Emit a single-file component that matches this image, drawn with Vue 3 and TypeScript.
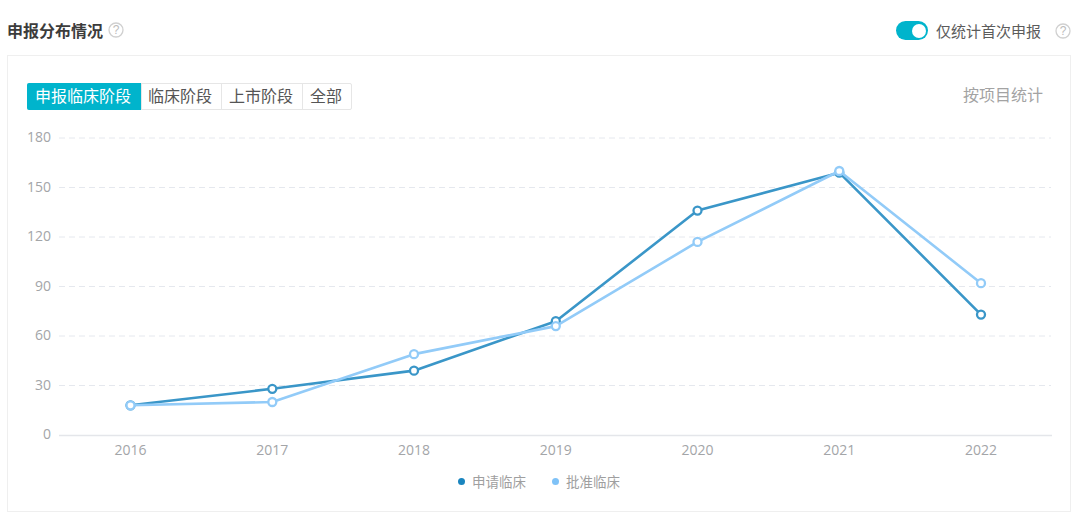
<script setup lang="ts">
const tabs = ['申报临床阶段', '临床阶段', '上市阶段', '全部']
const years = [2016, 2017, 2018, 2019, 2020, 2021, 2022]
const xs = [130.5, 272.3, 414, 555.8, 697.5, 839.3, 981]
const yOf = (v: number) => 435 - v * 1.65
const ticks = [0, 30, 60, 90, 120, 150, 180]
const series = [
  { name: '申请临床', color: '#3a96c8', values: [18, 28, 39, 69, 136, 159, 73] },
  { name: '批准临床', color: '#92cbf8', values: [18, 20, 49, 66, 117, 160, 92] },
]
const pts = (v: number[]) => v.map((n, i) => `${xs[i]},${yOf(n)}`).join(' ')
</script>

<template>
  <div class="page">
    <header class="head">
      <div class="title-wrap">
        <h2 class="title">申报分布情况</h2>
        <svg class="help" viewBox="0 0 16 16"><circle cx="8" cy="8" r="7" /><text x="8" y="12" text-anchor="middle">?</text></svg>
      </div>
      <div class="switch-wrap">
        <span class="switch"><i></i></span>
        <span class="switch-label">仅统计首次申报</span>
        <svg class="help help-r" viewBox="0 0 16 16"><circle cx="8" cy="8" r="7" /><text x="8" y="12" text-anchor="middle">?</text></svg>
      </div>
    </header>
    <section class="card">
      <div class="toolbar">
        <div class="tabs">
          <span v-for="(t, i) in tabs" :key="t" class="tab" :class="{ active: i === 0 }">{{ t }}</span>
        </div>
        <span class="by">按项目统计</span>
      </div>
      <div class="chart">
        <svg class="plot" width="1062" height="402" viewBox="8 110 1062 402">
          <g v-for="t in ticks" :key="t">
            <line v-if="t > 0" x1="59" x2="1051" :y1="yOf(t)" :y2="yOf(t)" class="grid" />
            <text x="51" :y="yOf(t) + 4" text-anchor="end" class="axis">{{ t }}</text>
          </g>
          <line x1="59" x2="1052" y1="435.5" y2="435.5" class="base" />
          <text v-for="(y, i) in years" :key="y" :x="xs[i]" y="455" text-anchor="middle" class="axis">{{ y }}</text>
          <g v-for="s in series" :key="s.name">
            <polyline :points="pts(s.values)" fill="none" :stroke="s.color" stroke-width="2.6" stroke-linejoin="round" />
            <circle v-for="(n, i) in s.values" :key="i" :cx="xs[i]" :cy="yOf(n)" r="4" fill="#fff" :stroke="s.color" stroke-width="2.3" />
          </g>
        </svg>
        <div class="legend">
          <span class="legend-item"><i class="dot dark"></i>申请临床</span>
          <span class="legend-item"><i class="dot light"></i>批准临床</span>
        </div>
      </div>
    </section>
  </div>
</template>

<style>
html, body { margin: 0; background: #fff; }
</style>

<style scoped>
.page {
  width: 1080px;
  height: 528px;
  box-sizing: border-box;
  padding: 0 9px 0 7px;
  font-family: "Noto Sans CJK SC", "Liberation Sans", sans-serif;
  overflow: hidden;
}
.head {
  height: 55px;
  padding-top: 6px;
  box-sizing: border-box;
  display: flex;
  align-items: center;
  justify-content: space-between;
}
.title-wrap, .switch-wrap { display: flex; align-items: center; }
.title {
  margin: -2px 0 0;
  font-size: 16px;
  font-weight: 700;
  color: #3c3c3c;
  line-height: 20px;
  white-space: nowrap;
}
.title-wrap .help { margin-top: -2px; }
.help { width: 16px; height: 16px; margin-left: 5px; }
.help circle { fill: none; stroke: #d0d0d0; stroke-width: 1.3; }
.help text { font-size: 12px; fill: #bcbcbc; font-family: "Liberation Sans", sans-serif; }
.help-r { margin-left: 14px; margin-right: 0; }
.switch {
  width: 32px;
  height: 19px;
  border-radius: 10px;
  background: #00b4cc;
  position: relative;
  margin-right: 8px;
}
.switch i {
  position: absolute;
  right: 2px;
  top: 2.5px;
  width: 14px;
  height: 14px;
  border-radius: 50%;
  background: #fff;
}
.switch-label { font-size: 15px; color: #5c5c5c; line-height: 20px; white-space: nowrap; }
.card {
  height: 457px;
  box-sizing: border-box;
  border: 1px solid #efefef;
}
.toolbar {
  height: 54px;
  box-sizing: border-box;
  padding: 27px 27px 0 19px;
  display: flex;
  justify-content: space-between;
  align-items: flex-start;
}
.tabs {
  display: flex;
  height: 27px;
  box-sizing: border-box;
  border: 1px solid #e6e6e6;
  border-radius: 2px;
}
.tab {
  padding: 0 9px 0 6px;
  font-size: 16px;
  line-height: 22px;
  color: #555;
  border-left: 1px solid #e6e6e6;
  white-space: nowrap;
}
.tab:nth-child(3), .tab:last-child { padding: 0 9px 0 7px; }
.tab.active { padding: 0 10px 0 8px; background: #00b4cc; color: #fff; border-left: 0; margin: -1px 0 -1px -1px; line-height: 24px; height: 27px; border-radius: 2px 0 0 2px; }
.by { font-size: 16px; line-height: 22px; color: #a3a3a3; white-space: nowrap; }
.chart { position: relative; }
.plot { display: block; }
.grid { stroke: #e5e8ee; stroke-width: 1; stroke-dasharray: 6 4; }
.base { stroke: #e4e6ea; stroke-width: 1.3; }
.axis { font-size: 14px; fill: #a3a5a8; font-family: "Open Sans", "Liberation Sans", sans-serif; }
.legend {
  position: absolute;
  left: 0;
  right: 0;
  top: 361px;
  display: flex;
  justify-content: center;
  gap: 26px;
}
.legend-item {
  display: flex;
  align-items: center;
  font-size: 13.5px;
  line-height: 20px;
  color: #9f9f9f;
}
.dot { width: 7px; height: 7px; border-radius: 50%; margin-right: 7px; }
.dot.dark { background: #1a85bf; }
.dot.light { background: #7fc2f7; }
</style>
